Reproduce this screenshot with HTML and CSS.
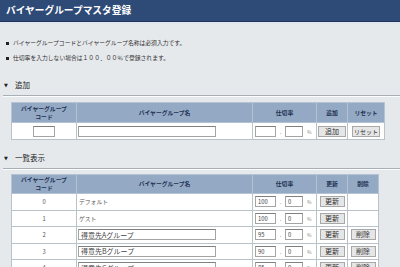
FILE: index.html
```html
<!DOCTYPE html>
<html lang="ja">
<head>
  <meta charset="UTF-8">
  <meta name="viewport" content="width=device-width, initial-scale=1.0">
  <title>バイヤーグループマスタ登録</title>
  <link rel="stylesheet" href="styles.css">
</head>
<body>
  <div class="title">バイヤーグループマスタ登録</div>
  <div class="titleLine"></div>

  <ul class="notes">
    <li>バイヤーグループコードとバイヤーグループ名称は必須入力です。</li>
    <li>仕切率を入力しない場合は１００．００％で登録されます。</li>
  </ul>

  <h2 class="sec"><span class="tri">▼</span>追加</h2>
  <table class="grid addGrid">
    <colgroup>
      <col class="cCode"><col class="cName"><col class="cRate"><col class="cBtn"><col class="cReset">
    </colgroup>
    <tr class="head">
      <th>バイヤーグループ<br>コード</th>
      <th>バイヤーグループ名</th>
      <th>仕切率</th>
      <th>追加</th>
      <th>リセット</th>
    </tr>
    <tr>
      <td class="center"><input type="text" class="code"></td>
      <td><input type="text" class="name"></td>
      <td class="rate"><input type="text" class="r1"><span class="dot">.</span><input type="text" class="r2"><span class="pct">%</span></td>
      <td class="center"><button type="button" class="btn">追加</button></td>
      <td class="center"><button type="button" class="btn wide">リセット</button></td>
    </tr>
  </table>

  <h2 class="sec secList"><span class="tri">▼</span>一覧表示</h2>
  <table class="grid listGrid">
    <colgroup>
      <col class="cCode"><col class="cName"><col class="cRate"><col class="cBtn"><col class="cDel">
    </colgroup>
    <tr class="head">
      <th>バイヤーグループ<br>コード</th>
      <th>バイヤーグループ名</th>
      <th>仕切率</th>
      <th>更新</th>
      <th>削除</th>
    </tr>
    <tr>
      <td class="center">0</td>
      <td class="plain">デフォルト</td>
      <td class="rate"><input type="text" class="r1" value="100"><span class="dot">.</span><input type="text" class="r2" value="0"><span class="pct">%</span></td>
      <td class="center"><button type="button" class="btn">更新</button></td>
      <td></td>
    </tr>
    <tr>
      <td class="center">1</td>
      <td class="plain">ゲスト</td>
      <td class="rate"><input type="text" class="r1" value="100"><span class="dot">.</span><input type="text" class="r2" value="0"><span class="pct">%</span></td>
      <td class="center"><button type="button" class="btn">更新</button></td>
      <td></td>
    </tr>
    <tr>
      <td class="center">2</td>
      <td><input type="text" class="name" value="得意先Aグループ"></td>
      <td class="rate"><input type="text" class="r1" value="95"><span class="dot">.</span><input type="text" class="r2" value="0"><span class="pct">%</span></td>
      <td class="center"><button type="button" class="btn">更新</button></td>
      <td class="center"><button type="button" class="btn">削除</button></td>
    </tr>
    <tr>
      <td class="center">3</td>
      <td><input type="text" class="name" value="得意先Bグループ"></td>
      <td class="rate"><input type="text" class="r1" value="90"><span class="dot">.</span><input type="text" class="r2" value="0"><span class="pct">%</span></td>
      <td class="center"><button type="button" class="btn">更新</button></td>
      <td class="center"><button type="button" class="btn">削除</button></td>
    </tr>
    <tr>
      <td class="center">4</td>
      <td><input type="text" class="name" value="得意先Cグループ"></td>
      <td class="rate"><input type="text" class="r1" value="85"><span class="dot">.</span><input type="text" class="r2" value="0"><span class="pct">%</span></td>
      <td class="center"><button type="button" class="btn">更新</button></td>
      <td class="center"><button type="button" class="btn">削除</button></td>
    </tr>
  </table>
</body>
</html>
```

FILE: styles.css
```css
body {
  margin: 0;
  background: #e6e9ec;
  font-family: "Noto Sans CJK JP", "Noto Sans", sans-serif;
  color: #333;
}
.title {
  height: 21px;
  line-height: 21px;
  padding-left: 6px;
  background: #2e4b78;
  border-bottom: 1px solid #1e3357;
  color: #fff;
  font-size: 9.7px;
  font-weight: bold;
}
.titleLine {
  height: 2px;
  background: #dfe6f0;
}
.notes {
  list-style: none;
  margin: 0;
  padding: 11px 0 0 6px;
}
.notes li {
  font-size: 5.8px;
  line-height: 15px;
  color: #333;
}
.notes li:before {
  content: "";
  display: inline-block;
  width: 3px;
  height: 3px;
  background: #222;
  margin-right: 4px;
  vertical-align: middle;
}
.sec {
  margin: 15px 0 0 3px;
  padding: 0 0 5px 1px;
  font-size: 7.5px;
  line-height: 10px;
  font-weight: normal;
  color: #222;
  border-bottom: 1px solid #a9afb5;
  box-shadow: 0 1px 0 #fbfcfd;
}
.secList {
  margin-top: 13px;
}
.tri {
  display: inline-block;
  font-family: "DejaVu Sans", sans-serif;
  font-size: 5px;
  width: 11px;
  vertical-align: 1px;
}
.grid {
  border-collapse: collapse;
  table-layout: fixed;
  margin: 6px 0 0 11px;
  border: 1px solid #9ea8b2;
}
.addGrid {
  width: 373px;
}
.listGrid {
  width: 366px;
  margin-top: 5px;
}
.cCode { width: 65px; }
.cName { width: 176px; }
.cRate { width: 64px; }
.cBtn { width: 31px; }
.cReset { width: 37px; }
.cDel { width: 31px; }
.grid th {
  background: #94a9c4;
  color: #1d3153;
  font-size: 5.8px;
  line-height: 8px;
  font-weight: bold;
  height: 19px;
  padding: 0;
  border: 1px solid #b4c2d3;
}
.listGrid th {
  height: 18px;
}
.grid td {
  background: #fff;
  height: 15.5px;
  padding: 0;
  border: 1px solid #b9c1c9;
  font-size: 5.8px;
  color: #555;
}
.addGrid td {
  height: 16px;
}
.center {
  text-align: center;
}
.plain {
  padding-left: 2px !important;
}
input {
  box-sizing: border-box;
  height: 11px;
  margin: 0;
  padding: 0 2px;
  border: 1px solid #a4a4a4;
  border-top-color: #808080;
  background: #fff;
  font-family: "Noto Sans CJK JP", "Noto Sans", sans-serif;
  font-size: 5.8px;
  color: #444;
  vertical-align: middle;
}
input.code {
  width: 22px;
}
input.name {
  width: 138px;
  margin-left: 1px;
  font-size: 7px;
}
.rate {
  padding-left: 2px !important;
  white-space: nowrap;
}
input.r1 {
  width: 21px;
}
input.r2 {
  width: 18px;
}
.dot {
  display: inline-block;
  width: 9px;
  text-align: center;
  vertical-align: middle;
}
.pct {
  display: inline-block;
  margin-left: 4px;
  color: #888;
  font-size: 5px;
  vertical-align: middle;
}
.btn {
  box-sizing: border-box;
  width: 25px;
  height: 11px;
  margin: 0;
  padding: 0;
  border: 1px solid #a8a8a8;
  background: #e6e6e6;
  font-family: "Noto Sans CJK JP", "Noto Sans", sans-serif;
  font-size: 7px;
  line-height: 9px;
  color: #333;
  vertical-align: middle;
}
.addGrid .btn {
  width: 28px;
}
.btn.wide {
  font-size: 6px;
}
```
